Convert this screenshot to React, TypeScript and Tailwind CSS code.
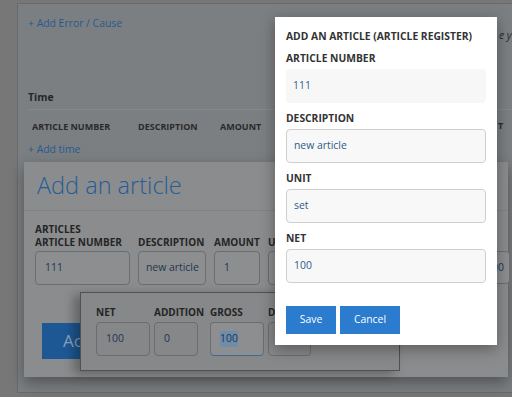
import React from "react";

const font = { fontFamily: '"Open Sans", "Liberation Sans", sans-serif' };

function DimInput({ value, className = "" }: { value: string; className?: string }) {
  return (
    <div
      className={`flex h-[34px] items-center whitespace-nowrap rounded-[4px] border border-[#6c6d6f] bg-[#8d8e90] px-[9px] text-[10.4px] text-[#1e3550] ${className}`}
    >
      {value}
    </div>
  );
}

function ModalField({ label, value, readOnly = false }: { label: string; value: string; readOnly?: boolean }) {
  return (
    <div className="flex flex-col">
      <div className="mt-[8px] mb-[4px] h-[14px] text-[10.3px] font-bold leading-[14px] text-[#333]">{label}</div>
      <div
        className={`flex h-[34px] items-center rounded-[4px] px-[7px] text-[10.4px] text-[#2c5b8a] ${
          readOnly ? "bg-[#f7f7f7]" : "border border-[#cfcfcf] bg-[#f8f8f8]"
        }`}
      >
        {value}
      </div>
    </div>
  );
}

export default function App() {
  return (
    <div className="relative h-[397px] w-[512px] overflow-hidden bg-[#777777]" style={font}>
      {/* background page panel */}
      <div className="ml-[17px] mt-[3px] h-[390px] w-[520px] border border-[#6a6a6a] bg-[#7c7f82] pl-[10px] pt-[11px]">
        <div className="text-[10.4px] leading-[16px] text-[#265a8e]">+ Add Error / Cause</div>
        <div className="mt-[58px] text-[10.4px] font-bold leading-[16px] text-[#262626]">Time</div>
        <div className="mt-[4px] h-px w-full bg-[#85888c]" />
        <div className="mt-[9px] flex h-[16px] items-center text-[9px] font-bold uppercase text-[#2a2a2a]">
          <span className="ml-[4px] w-[106px]">Article number</span>
          <span className="w-[82px]">Description</span>
          <span>Amount</span>
        </div>
        <div className="mt-[6px] text-[10.4px] leading-[16px] text-[#265a8e]">+ Add time</div>
      </div>

      {/* right-edge background text */}
      <div className="absolute left-[499px] top-[28px] whitespace-nowrap text-[10.4px] italic text-[#2a2a2a]">e ye</div>
      <div className="absolute left-[498px] top-[119px] text-[9px] font-bold text-[#2a2a2a]">T</div>

      {/* Add an article dialog */}
      <div className="absolute left-[24px] top-[162px] h-[215px] w-[484px] bg-[#8b8c8d] shadow-[0_6px_14px_rgba(0,0,0,0.35)]">
        <div className="h-[49px] border-b border-[#818285] pl-[13px] pt-[8px] text-[23.5px] font-light leading-[30px] text-[#245d98]">
          Add an article
        </div>
        <div className="pl-[11px] pt-[13px]">
          <div className="h-[12px] text-[10px] font-bold uppercase leading-[11px] text-[#252525]">Articles</div>
          <div className="flex h-[12px] gap-[8px] whitespace-nowrap text-[10px] font-bold uppercase leading-[12px] text-[#252525]">
            <span className="w-[95px]">Article number</span>
            <span className="w-[68px]">Description</span>
            <span className="w-[46px]">Amount</span>
            <span>U</span>
          </div>
          <div className="mt-[3px] flex gap-[8px]">
            <DimInput value="111" className="h-[33px] w-[95px]" />
            <DimInput value="new article" className="h-[33px] w-[68px] !px-[7px]" />
            <DimInput value="1" className="h-[33px] w-[46px]" />
            <DimInput value="" className="h-[33px] w-[40px]" />
          </div>
          <div className="ml-[7px] mt-[38px] flex h-[36px] w-[60px] items-center bg-[#1e5894] pl-[21px] text-[17px] text-[#8aa4c0]">
            Ac
          </div>
        </div>
        <div className="absolute left-[442px] top-[89px] flex h-[33px] w-[44px] items-center rounded-[4px] border border-[#6c6d6f] bg-[#8d8e90] pl-[19px] text-[10.4px] text-[#1e3550]">
          100
        </div>
      </div>

      {/* NET popup */}
      <div className="absolute left-[80px] top-[292px] h-[79px] w-[320px] border border-[#505153] bg-[#878889] pl-[15px] pt-[12px] shadow-[-6px_3px_10px_rgba(0,0,0,0.3)]">
        <div className="flex h-[14px] items-center whitespace-nowrap text-[10px] font-bold uppercase text-[#252525]">
          <span className="w-[58px]">Net</span>
          <span className="w-[56px]">Addition</span>
          <span className="w-[58px]">Gross</span>
          <span>D</span>
        </div>
        <div className="mt-[3px] flex">
          <DimInput value="100" className="w-[54px] bg-[#868789]" />
          <DimInput value="0" className="ml-[4px] w-[44px] bg-[#868789]" />
          <div className="ml-[12px] flex h-[34px] w-[54px] items-center rounded-[4px] border border-[#6c6d6f] border-b-[#3f6a95] bg-[#8d8e90] px-[9px] text-[10.4px] text-[#1e3550]">
            <span className="bg-[#6f8cab]">100</span>
          </div>
          <DimInput value="" className="ml-[4px] w-[43px] bg-[#868789]" />
        </div>
      </div>

      {/* Modal */}
      <div className="absolute left-[275px] top-[17px] flex w-[222px] flex-col bg-white px-[11px] pb-[11px] pt-[12px] shadow-[0_4px_14px_rgba(0,0,0,0.35)]">
        <div className="h-[14px] whitespace-nowrap text-[10.3px] font-bold uppercase leading-[14px] text-[#333]">
          Add an article (article register)
        </div>
        <ModalField label="ARTICLE NUMBER" value="111" readOnly />
        <ModalField label="DESCRIPTION" value="new article" />
        <ModalField label="UNIT" value="set" />
        <ModalField label="NET" value="100" />
        <div className="mt-[23px] flex gap-[4px]">
          <button className="h-[28px] w-[50px] bg-[#2b7bcf] text-[10.4px] text-white">Save</button>
          <button className="h-[28px] w-[60px] bg-[#2b7bcf] text-[10.4px] text-white">Cancel</button>
        </div>
      </div>
    </div>
  );
}
